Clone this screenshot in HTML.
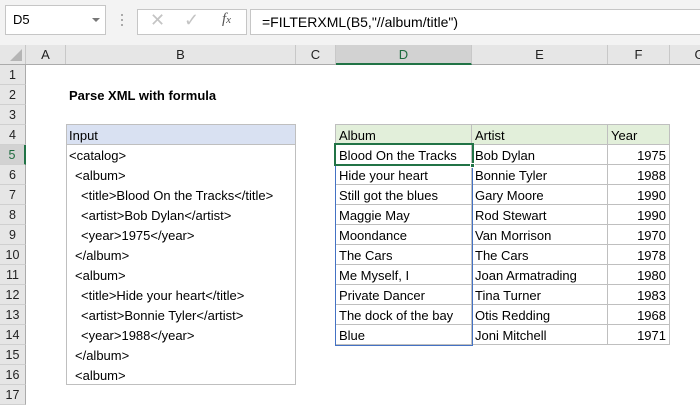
<!DOCTYPE html>
<html><head><style>
*{margin:0;padding:0;box-sizing:border-box}
body{width:700px;height:400px;overflow:hidden;background:#fff;font-family:"Liberation Sans",sans-serif;font-size:13px;color:#000;position:relative}
.a{position:absolute}
.top{left:0;top:0;width:700px;height:45px;background:#f3f3f3}
.box{position:absolute;background:#fff;border:1px solid #c6c6c6}
.hdr{left:0;top:45px;width:700px;height:20px;background:#e6e6e6;border-bottom:1px solid #ababab}
.ch{position:absolute;top:45px;height:19px;line-height:19px;text-align:center;color:#222;border-right:1px solid #c8c8c8;font-size:13px}
.rh{position:absolute;left:0;width:26px;height:20px;line-height:20px;text-align:center;background:#e6e6e6;border-bottom:1px solid #d0d0d0;border-right:1px solid #ababab;color:#222;font-size:12.5px}
.t{position:absolute;height:20px;line-height:21px;white-space:nowrap;padding-left:3px}
.c{position:absolute;height:20px;line-height:21px;border-right:1px solid #bfbfbf;border-bottom:1px solid #bfbfbf;padding-left:3px;white-space:nowrap}
</style></head><body>
<div class="a top"></div>
<div class="box" style="left:5px;top:5px;width:101px;height:30px;line-height:28px;padding-left:7px;font-size:13px">D5<span style="position:absolute;left:86px;top:12px;border-left:4px solid transparent;border-right:4px solid transparent;border-top:4px solid #777"></span></div>
<div class="a" style="left:121px;top:14px;width:2px;height:2px;background:#aaa;box-shadow:0 5px #aaa,0 10px #aaa"></div>
<div class="box" style="left:137px;top:9px;width:110px;height:26px"></div>
<div class="a" style="left:150px;top:10px;color:#c4c4c4;font-size:18px">✕</div>
<div class="a" style="left:184px;top:10px;color:#c4c4c4;font-size:18px">✓</div>
<div class="a" style="left:222px;top:11px;color:#555;font-family:'Liberation Serif',serif;font-style:italic;font-size:15px">f<span style="font-size:11px">x</span></div>
<div class="box" style="left:250px;top:9px;width:460px;height:26px;line-height:24px;padding-left:11px;font-size:14px">=FILTERXML(B5,"//album/title")</div>
<div class="a hdr"></div>
<div class="a" style="left:10px;top:49px;width:0;height:0;border-left:12px solid transparent;border-bottom:12px solid #b5b5b5"></div>
<div class="ch" style="left:0;width:26px"></div>
<div class="ch" style="left:26px;width:40px">A</div>
<div class="ch" style="left:66px;width:230px">B</div>
<div class="ch" style="left:296px;width:40px">C</div>
<div class="ch" style="left:336px;width:136px;background:#d2d2d2;border-bottom:2px solid #217346;color:#1e6b3f;height:20px">D</div>
<div class="ch" style="left:472px;width:136px">E</div>
<div class="ch" style="left:608px;width:62px">F</div>
<div class="ch" style="left:670px;width:60px">G</div>
<div class="rh" style="top:65px">1</div><div class="rh" style="top:85px">2</div><div class="rh" style="top:105px">3</div><div class="rh" style="top:125px">4</div>
<div class="rh" style="top:145px;background:#d2d2d2;border-right:2px solid #217346;color:#1e6b3f">5</div>
<div class="rh" style="top:165px">6</div><div class="rh" style="top:185px">7</div><div class="rh" style="top:205px">8</div><div class="rh" style="top:225px">9</div><div class="rh" style="top:245px">10</div><div class="rh" style="top:265px">11</div><div class="rh" style="top:285px">12</div><div class="rh" style="top:305px">13</div><div class="rh" style="top:325px">14</div><div class="rh" style="top:345px">15</div><div class="rh" style="top:365px">16</div><div class="rh" style="top:385px">17</div>
<div class="t" style="left:66px;top:85px;font-weight:bold">Parse XML with formula</div>
<div class="a" style="left:66px;top:124px;width:230px;height:261px;border:1px solid #bfbfbf"></div>
<div class="a" style="left:67px;top:125px;width:228px;height:20px;background:#d9e1f2;border-bottom:1px solid #bfbfbf"></div>
<div class="t" style="left:66px;top:125px">Input</div>
<div class="t" style="left:66px;top:145px">&lt;catalog&gt;</div>
<div class="t" style="left:72px;top:165px">&lt;album&gt;</div>
<div class="t" style="left:78px;top:185px">&lt;title&gt;Blood On the Tracks&lt;/title&gt;</div>
<div class="t" style="left:78px;top:205px">&lt;artist&gt;Bob Dylan&lt;/artist&gt;</div>
<div class="t" style="left:78px;top:225px">&lt;year&gt;1975&lt;/year&gt;</div>
<div class="t" style="left:72px;top:245px">&lt;/album&gt;</div>
<div class="t" style="left:72px;top:265px">&lt;album&gt;</div>
<div class="t" style="left:78px;top:285px">&lt;title&gt;Hide your heart&lt;/title&gt;</div>
<div class="t" style="left:78px;top:305px">&lt;artist&gt;Bonnie Tyler&lt;/artist&gt;</div>
<div class="t" style="left:78px;top:325px">&lt;year&gt;1988&lt;/year&gt;</div>
<div class="t" style="left:72px;top:345px">&lt;/album&gt;</div>
<div class="t" style="left:72px;top:365px">&lt;album&gt;</div>

<div class="a" style="left:335px;top:124px;width:335px;height:221px;border-left:1px solid #bfbfbf;border-top:1px solid #bfbfbf"></div>
<div class="c" style="left:336px;top:125px;width:136px;background:#e2efda">Album</div>
<div class="c" style="left:472px;top:125px;width:136px;background:#e2efda">Artist</div>
<div class="c" style="left:608px;top:125px;width:62px;background:#e2efda">Year</div>
<div class="c" style="left:336px;top:145px;width:136px">Blood On the Tracks</div><div class="c" style="left:472px;top:145px;width:136px">Bob Dylan</div><div class="c" style="left:608px;top:145px;width:62px;text-align:right;padding-right:3px">1975</div>
<div class="c" style="left:336px;top:165px;width:136px">Hide your heart</div><div class="c" style="left:472px;top:165px;width:136px">Bonnie Tyler</div><div class="c" style="left:608px;top:165px;width:62px;text-align:right;padding-right:3px">1988</div>
<div class="c" style="left:336px;top:185px;width:136px">Still got the blues</div><div class="c" style="left:472px;top:185px;width:136px">Gary Moore</div><div class="c" style="left:608px;top:185px;width:62px;text-align:right;padding-right:3px">1990</div>
<div class="c" style="left:336px;top:205px;width:136px">Maggie May</div><div class="c" style="left:472px;top:205px;width:136px">Rod Stewart</div><div class="c" style="left:608px;top:205px;width:62px;text-align:right;padding-right:3px">1990</div>
<div class="c" style="left:336px;top:225px;width:136px">Moondance</div><div class="c" style="left:472px;top:225px;width:136px">Van Morrison</div><div class="c" style="left:608px;top:225px;width:62px;text-align:right;padding-right:3px">1970</div>
<div class="c" style="left:336px;top:245px;width:136px">The Cars</div><div class="c" style="left:472px;top:245px;width:136px">The Cars</div><div class="c" style="left:608px;top:245px;width:62px;text-align:right;padding-right:3px">1978</div>
<div class="c" style="left:336px;top:265px;width:136px">Me Myself, I</div><div class="c" style="left:472px;top:265px;width:136px">Joan Armatrading</div><div class="c" style="left:608px;top:265px;width:62px;text-align:right;padding-right:3px">1980</div>
<div class="c" style="left:336px;top:285px;width:136px">Private Dancer</div><div class="c" style="left:472px;top:285px;width:136px">Tina Turner</div><div class="c" style="left:608px;top:285px;width:62px;text-align:right;padding-right:3px">1983</div>
<div class="c" style="left:336px;top:305px;width:136px">The dock of the bay</div><div class="c" style="left:472px;top:305px;width:136px">Otis Redding</div><div class="c" style="left:608px;top:305px;width:62px;text-align:right;padding-right:3px">1968</div>
<div class="c" style="left:336px;top:325px;width:136px">Blue</div><div class="c" style="left:472px;top:325px;width:136px">Joni Mitchell</div><div class="c" style="left:608px;top:325px;width:62px;text-align:right;padding-right:3px">1971</div>
<div class="a" style="left:335px;top:144px;width:138px;height:202px;border:1px solid #4472c4"></div>
<div class="a" style="left:334px;top:143px;width:140px;height:23px;border:2px solid #217346"></div>
<div class="a" style="left:470px;top:163px;width:5px;height:5px;background:#217346;border:1px solid #fff"></div>
</body></html>
